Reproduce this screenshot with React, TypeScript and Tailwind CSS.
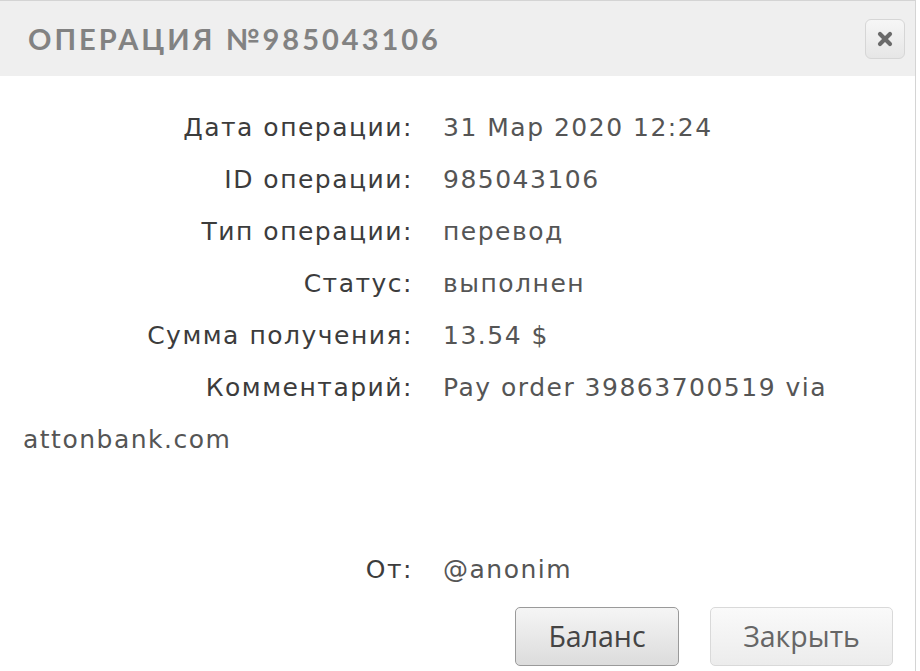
import { X } from "lucide-react";

interface Row {
    readonly label: string;
    readonly value: string;
}

const rows: Row[] = [
    { label: "Дата операции:", value: "31 Мар 2020 12:24" },
    { label: "ID операции:", value: "985043106" },
    { label: "Тип операции:", value: "перевод" },
    { label: "Статус:", value: "выполнен" },
    { label: "Сумма получения:", value: "13.54 $" },
    { label: "Комментарий:", value: "Pay order 39863700519 via" },
];

const InfoLine = ({ label, value }: Row) => (
    <p className="flex leading-[52px] text-[#555]">
        <span className="w-[390px] mr-[30px] text-right text-[#3c3c3c]">{label}</span>
        <span>{value}</span>
    </p>
);

const App = () => (
    <div className="w-[920px] h-[671px] bg-white overflow-hidden">
        <div className="w-[916px] h-full border-t border-r border-[#d4d4d4] flex flex-col">
            <header className="h-[75px] bg-[#efefef] flex items-center justify-between pl-[28px] pr-[10px]">
                <h1 className="font-['Lato',sans-serif] font-bold text-[29px] tracking-[3px] text-[#828282]">
                    ОПЕРАЦИЯ №985043106
                </h1>
                <button className="w-[40px] h-[40px] rounded-[6px] border border-[#d6d6d6] bg-gradient-to-b from-[#f6f6f6] to-[#e6e6e6] flex items-center justify-center">
                    <X className="w-[20px] h-[20px] text-[#6a6a6a]" strokeWidth={5} />
                </button>
            </header>
            <div className="flex-1 pl-[23px] pr-[10px] pt-[26px] font-['DejaVu_Sans',sans-serif] text-[25px] tracking-[1.5px]">
                {rows.map((r) => (
                    <InfoLine key={r.label} {...r} />
                ))}
                {/* comment wraps under the label column */}
                <p className="leading-[52px] text-[#555]">attonbank.com</p>
                <div className="h-[78px]" />
                <InfoLine label="От:" value="@anonim" />
            </div>
            <footer className="flex justify-end gap-[31px] pr-[22px] pb-[5px] font-['Open_Sans',sans-serif] text-[28.5px]">
                <button className="w-[164px] h-[59px] rounded-[5px] border border-[#9a9a9a] bg-gradient-to-b from-[#f5f5f5] to-[#dcdcdc] text-[#444]">
                    Баланс
                </button>
                <button className="w-[183px] h-[59px] rounded-[5px] border border-[#d9d9d9] bg-gradient-to-b from-[#fafafa] to-[#ececec] text-[#666]">
                    Закрыть
                </button>
            </footer>
        </div>
    </div>
);

export default App;
